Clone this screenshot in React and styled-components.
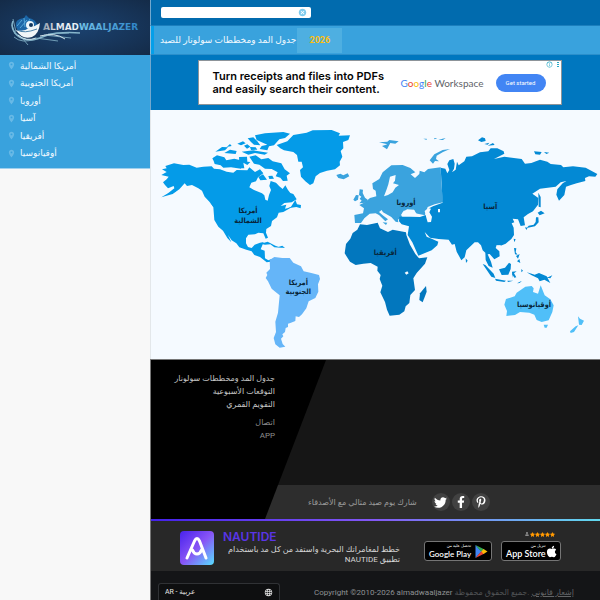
import React from "react";
import styled, { createGlobalStyle } from "styled-components";
import { FaTwitter, FaFacebookF, FaPinterestP, FaApple, FaStar, FaUser } from "react-icons/fa";
import { MdLocationOn, MdLanguage, MdCancel, MdInfoOutline } from "react-icons/md";

const GlobalStyle = createGlobalStyle`
  * { box-sizing: border-box; }
  html { scrollbar-width: none; }
  body {
    margin: 0;
    background: #f8f8f8;
    font-family: Roboto, "DejaVu Sans", sans-serif;
    font-size: 8px;
  }
  a { color: inherit; text-decoration: none; }
  svg { display: block; }
`;

const Page = styled.div`
  display: flex;
  min-height: 100vh;
`;

const Sidebar = styled.aside`
  flex: 0 0 150px;
`;

const LogoBox = styled.a`
  display: flex;
  height: 55px;
  background: radial-gradient(ellipse at 50% 50%, #1b4270, #142b48);
`;

const Zones = styled.ul`
  display: grid;
  grid-auto-rows: 1fr;
  height: 114px;
  margin: 0;
  padding: 2px 0 6px 7px;
  list-style: none;
  background: #39a2dd;
  border-bottom: 1px solid #9fd0ee;
  font-size: 9px;
`;

const Zone = styled.li`
  display: flex;
  align-items: center;
  gap: 4px;
  color: #f3faff;

  svg {
    color: #68b9e6;
  }
`;

const Main = styled.main`
  flex: 1;
  min-width: 0;
`;

const Section = styled.section`
  border-left: 1px solid ${props => props.$edge};
`;

const SearchBar = styled(Section)`
  display: flex;
  height: 26px;
  padding: 7px 10px;
  background: #016bae;
  border-bottom: 1px solid #1c7fbd;
`;

const SearchField = styled.form`
  display: flex;
  align-items: center;
  width: 150px;
  height: 11px;
  padding-right: 4px;
  background: #fff;
  border-radius: 2px;
`;

const SearchInput = styled.input`
  flex: 1;
  min-width: 0;
  height: 11px;
  padding: 0 4px;
  border: 0;
  background: none;
  font-size: 8px;
`;

const IconButton = styled.button`
  padding: 0;
  border: 0;
  background: none;
  color: #7dcbee;
`;

const Menu = styled(Section)`
  display: flex;
  align-items: center;
  height: 29px;
  background: #39a2dd;
  border-bottom: 1px solid #2b8fcb;
  color: #f1f9ff;
  font-size: 9px;

  &::before {
    content: "";
    align-self: stretch;
    width: 3px;
    background: #049fe9;
  }
`;

const MenuLink = styled.a`
  padding: 0 1px 0 6px;
  white-space: nowrap;
`;

const Year = styled.a`
  width: 45px;
  font-weight: 700;
  line-height: 25px;
  text-align: center;
  color: #fdbf11;
  background: #4eafe1;
`;

const AdZone = styled(Section)`
  display: flex;
  justify-content: center;
  padding: 5px 0 5px 8px;
  background: #0077bf;
`;

const Ad = styled.div`
  position: relative;
  display: flex;
  align-items: center;
  width: 364px;
  height: 45px;
  padding: 0 15px 0 14px;
  border: 1px solid #8d9499;
  background: #fff;
`;

const AdTitle = styled.strong`
  flex: 0 0 188px;
  font: 600 11px/13px Inter, sans-serif;
  color: #050505;
  white-space: nowrap;
`;

const Brand = styled.span`
  flex: 1;
  font: 10px/14px Lato, sans-serif;
  color: #5f6368;
  white-space: nowrap;
`;

const Tint = styled.span`
  color: ${props => props.color};
`;

const AdButton = styled.button`
  width: 50px;
  height: 18px;
  padding: 0;
  border: 0;
  border-radius: 9px;
  background: #4285f4;
  color: #fff;
  font: 6px Roboto, sans-serif;
`;

const AdMarks = styled.span`
  position: absolute;
  top: 0;
  right: 2px;
  display: flex;
  gap: 4px;
  color: #28a9c6;
`;

const MapZone = styled(Section)`
  background: #f5faff;

  svg {
    width: 100%;
    height: auto;
  }
`;

const MapLabel = styled.text`
  font: bold 22px "DejaVu Sans Condensed", "DejaVu Sans", sans-serif;
  fill: #08263a;
  text-anchor: middle;
`;

const FooterTop = styled(Section)`
  position: relative;
  background: #161616;
  border-top: 1px solid #777;

  &::before {
    content: "";
    position: absolute;
    inset: 0 auto 0 0;
    width: 175px;
    background: #000;
    clip-path: polygon(0 0, 100% 0, 114px 100%, 0 100%);
  }
`;

const FooterLinks = styled.nav`
  position: relative;
  display: flex;
  flex-direction: column;
  width: 124px;
  height: 125px;
  padding-top: 12px;
  line-height: 13px;
  color: #c4c4c4;
  text-align: right;
  white-space: nowrap;
`;

const MinorLinks = styled.div`
  display: flex;
  flex-direction: column;
  margin-top: 5px;
  color: #8c8c8c;
`;

const ShareBar = styled.div`
  display: flex;
  align-items: center;
  gap: 2px;
  height: 34px;
  padding-left: 157px;
  background: #2d2d2d;
  color: #9b9b9b;
`;

const ShareText = styled.span`
  margin-right: 13px;
  white-space: nowrap;
`;

const Round = styled.a`
  display: flex;
  align-items: center;
  justify-content: center;
  width: 18px;
  height: 18px;
  border-radius: 50%;
  background: #414141;
  color: #fff;
`;

const AppBar = styled(Section)`
  display: flex;
  align-items: center;
  height: 52px;
  padding: 6px 38px 0 29px;
  background: linear-gradient(90deg, #4421e8, #8359f5 50%, #61d9ee) top / 100% 2px no-repeat #282828;
`;

const AppText = styled.div`
  flex: 0 0 177px;
  margin: 0 24px 0 9px;
`;

const AppName = styled.strong`
  display: block;
  font: 600 12px/12px Inter, sans-serif;
  margin-bottom: 2px;
  color: #5a35e6;
`;

const AppPitch = styled.p`
  margin: 0;
  line-height: 10px;
  color: #d6d6d6;
  white-space: nowrap;
`;

const Stores = styled.div`
  display: flex;
  align-items: flex-end;
  gap: 9px;
  height: 34px;
  padding-bottom: 4px;
`;

const Store = styled.div`
  display: flex;
  flex-direction: column;
  align-items: flex-end;
  gap: 4px;
`;

const Rating = styled.span`
  display: flex;
  padding-right: 6px;
  color: #ff9800;

  svg:first-child {
    margin-right: 1px;
    color: #8c8c8c;
  }
`;

const Badge = styled.a`
  display: flex;
  align-items: center;
  justify-content: space-between;
  width: ${props => props.$width}px;
  height: 20px;
  padding: 0 3px 0 4px;
  border: 1px solid #757575;
  border-radius: 3px;
  background: #000;
  color: #fff;
  text-align: right;
  white-space: nowrap;
`;

const BadgeHint = styled.span`
  display: block;
  font-size: 4px;
  line-height: 6px;
`;

const BadgeName = styled.span`
  display: block;
  font: 600 ${props => props.$size}px/10px Lato, Roboto, sans-serif;
`;

const Bottom = styled(Section)`
  display: flex;
  align-items: flex-start;
  gap: 34px;
  min-height: 29px;
  padding: 12px 27px 0 7px;
  background: #141517;
`;

const Language = styled.label`
  display: flex;
  align-items: center;
  flex: 0 0 122px;
  height: 17px;
  padding: 0 6px;
  border: 1px solid #303235;
  border-bottom: 0;
  border-radius: 3px 3px 0 0;
  background: #0e0f10;
  color: #e6e6e6;
`;

const Select = styled.select`
  flex: 1;
  appearance: none;
  padding: 0;
  border: 0;
  background: none;
  color: inherit;
  font: 7px Roboto, "DejaVu Sans", sans-serif;
`;

const Legal = styled.p`
  display: flex;
  gap: 2px;
  margin: 5px 0 0;
  line-height: 10px;
  color: #515355;
  white-space: nowrap;
`;

const Owner = styled.span`
  color: #8e9193;
`;

const LegalLink = styled.a`
  color: #626466;
  text-decoration: underline;
`;

const zones = [
  "أمريكا الشمالية",
  "أمريكا الجنوبية",
  "أوروبا",
  "آسيا",
  "أفريقيا",
  "أوقيانوسيا"
];

const footerLinks = ["جدول المد ومخططات سولونار", "التوقعات الأسبوعية", "التقويم القمري"];

const google = [
  ["G", "#4285f4"],
  ["o", "#ea4335"],
  ["o", "#fbbc05"],
  ["g", "#4285f4"],
  ["l", "#34a853"],
  ["e", "#ea4335"]
];

function Logo() {
  return (
    <svg width="150" height="55" viewBox="0 0 150 55" role="img" aria-label="Almadwaaljazer">
      <defs>
        <linearGradient id="word">
          <stop offset="0" stopColor="#8d9aab" />
          <stop offset=".15" stopColor="#dfe6ec" />
          <stop offset=".36" stopColor="#eef3f7" />
          <stop offset=".38" stopColor="#73c3e8" />
          <stop offset="1" stopColor="#2d84c8" />
        </linearGradient>
      </defs>
      <g fill="none" stroke="#86b5cb">
        <path d="M13 21C10 28 15 36 24 39C36 43 44 34 57 33Q70 32 80 33" strokeWidth="1.5" />
        <path d="M12 25L15 34M13 19l3 13M14 37Q22 44 35 39M23 39l5 6M36 38l22 3M44 35l27 3M48 34l21-1" opacity=".8" />
        <path d="M40 36Q55 32 65 39M18 35q8 7 18 3" stroke="#d0e2ea" />
      </g>
      <path d="M16 27Q14 19 24 18L26 15L29 18Q36 19 38 27L35 34H20Z" fill="#1b66a7" />
      <path d="M17 26L22 20M20 28l7-8M24 18l1 9M30 19l-3 5" stroke="#54a6d9" />
      <path d="M16 30Q24 32 29 28Q34 27 40 23Q39 34 32 37Q22 40 16 30Z" fill="#f2f6f8" />
      <path d="M17 30Q24 34 37 29" stroke="#4d83aa" fill="none" />
      <circle cx="30" cy="25" r="4" fill="#eaf5fb" />
      <circle cx="31" cy="25" r="2" fill="#12385f" />
      <text x="43" y="30" fontFamily="DejaVu Sans, sans-serif" fontWeight="bold" fontSize="9" fill="url(#word)">ALMADWAALJAZER</text>
    </svg>
  );
}

function WorldMap() {
  return (
    <svg viewBox="3 -30 1347 747" strokeLinejoin="round">
      <g fill="#049be8">
        <path d="M34 165L50 156L36 148L50 145L46 138L72 130L100 135L118 134L140 143L160 140L185 139L192 146L210 148L230 155L250 158L260 150L292 151L298 142L315 156L330 148L340 160L324 172L318 184L304 188L298 202L312 210L336 220L343 226L346 239L353 242L357 225L363 210L358 198L362 183L378 188L388 199L398 207L406 196L414 210L421 219L430 222L440 238L425 247L403 249L392 258L409 254L405 266L425 262L400 276L386 278L381 292L366 303L363 318L349 327L348 338L354 353L347 356L340 340L325 338L315 343L295 344L288 355V370L294 381L305 384L314 374L330 368L341 366L332 388L344 392L345 415L355 421L367 416L362 425L350 427L330 411L313 405L305 394L289 389L268 382L259 370L245 361L234 345L244 367L232 354L219 332L205 320L193 300L190 262L181 248L164 230L156 212L145 205L126 195L111 198L104 190L88 208L68 222L34 232L55 219L73 205L71 198L54 205L45 195L39 187L50 178L56 170Z" />
        <path d="M380 75L412 64L430 45L470 38L488 31L545 30L570 40L566 47L600 46L595 60L579 66L580 85L572 93L577 110L569 125L570 136L555 148L531 152L510 159L497 169L490 190L480 195L466 184L453 170L450 150L459 142L455 125L445 125L441 105L430 96L402 91L391 85Z" />
        <path d="M315 46L345 40L400 36L420 41L405 54L388 58L372 76L357 79L352 91L329 87L335 78L352 74L320 60Z" />
        <path d="M293 55l17-3 12 12 9 12-19-2-9-8zM191 123l-4-8 14-9 22 6 6 9 24-5 16 4 9 16-5 10-30-4-23 1-8-7-18-4zM196 95l20-14 18 1-9 9zM223 99l17-10 20 4-3 9zM275 95l35-4 44 7-10 6-29-5-20 5zM262 71l17-7 8 6-14 6zM230 81l10-9 5 6zM267 111l24-1 1 15 9 1-9 9-12-7 3 17-14-1zM298 110l19-4 17 12 21-4 13 10 26 6 10 18 16 12-10 7 3 15-14 1-8-10-14-4 6-12-18-10-20-1-17-12-16-3zM325 171l14-8 12 16-20 2zM355 168l12-1 5 9-14 1zM282 77l10-4 9 7-10 6zM300 81l17 1 5 7-19 1z" />
        <path d="M413 265l10-5 13-20 5 13 12 2-1 10-13-4zM332 371l21-6 23 12 17 6-20-1-12-9-16 1zM382 382l15-5 8 7zM179 246l14 7 5 10-8-3zM68 210l15-5-7 10z" />
      </g>
      <path transform="translate(240 330)" fill="#65b5f8" d="M119 90L133 81L157 84L179 84L190 98L213 109L221 124L244 129L267 135L270 147L264 163L265 185L256 204L236 214L229 235L216 253L207 261L197 259L196 273L181 279L174 281L174 291L167 294L165 306L157 313L160 319L153 326L158 342L166 350L149 353L136 343L131 324L138 306L136 275L144 248L149 196L134 184L125 176L114 154L107 144L112 135L109 128L120 117Z" />
      <g transform="translate(540 0)" fill="#3aa3de">
        <path d="M75 309L73 285L99 280L102 265L88 255L105 247L120 234L139 229L137 212L129 207L127 190L148 177L158 157L184 136L218 135L241 144L256 157L242 163L255 174L268 162L269 152L283 157L294 147L332 142L334 187L339 247L314 253L293 261L285 286L256 280L252 269L231 268L216 280L217 289L204 299L205 307L197 305L184 291L159 277L155 270L147 276L160 287L174 298L166 304L147 285L137 280L119 281L103 295L93 309Z" />
        <path d="M89 208l10 1-1 10 7 14 8 6-4 9-21 2 7-8-6-6 5-6-7-5zM70 239l8-14 8 1-2 13-9 5zM19 165l12-4 9 5 13-6 5 9-17 9-16-4zM299 121l14-18 25-13 22-3-21 9-19 11-2 10 9 7-12-1-6 8zM147 67l25-2 6-5 28 4-10 7-15-2-10 19-15-10 16-5zM280 56h10v4zM312 54l10 1-8 3zM325 59l22-5-8 6z" />
        <path d="M158 307l14 1-4 7z" />
      </g>
      <path fill="#f5faff" d="M702 229L710 208L715 193L720 170L737 165L735 182L729 190L747 195L736 203L728 217L714 225ZM753 285L761 272L775 270L781 276L792 269L800 282L795 288L774 290L756 289Z" />
      <path fill="#0277be" d="M630 313L651 315L683 308L690 325L714 336L728 329L768 337L769 345L780 374L796 402L807 415L832 412L825 431L800 459L790 475L795 510L781 525L778 549L767 559L763 574L748 584L719 587L711 569L705 546L691 517L697 497L689 477L692 465L682 452L683 440L662 429L640 431L617 435L600 425L584 400L588 372L601 356L608 339L622 329Z" />
      <path fill="#0277be" d="M810 520l18-22 2 17-12 32-10-7z" />
      <g fill="#0389d4">
        <path d="M872 143L886 146L892 160L898 150L892 132L898 121L910 117L914 131L912 146L906 157L917 149L921 125L926 136L943 124L949 110L966 109L990 97L1015 94L1022 85L1042 85L1061 94L1063 101L1032 117L1063 110L1115 117L1125 131L1144 129L1170 119L1192 125L1202 132L1233 135L1240 142L1269 139L1307 143L1342 162L1336 170L1317 169L1305 174L1306 183L1280 190L1263 195L1248 200L1243 225L1227 242L1219 224L1222 208L1238 190L1249 183L1232 187L1217 200L1170 206L1147 221L1165 234L1164 254L1149 274L1134 282L1121 292L1125 316L1112 318L1104 298L1088 296L1093 307L1085 310L1091 323L1092 345L1084 357L1067 371L1052 377L1040 375L1037 384L1048 394L1049 409L1033 418L1019 402L1013 403L1023 425L1028 443L1016 438L1007 420L1006 398L998 391L993 376L984 367L974 367L949 391L944 412L934 421L920 395L914 372L906 374L896 359L866 357L840 353L824 336L830 350L845 356L865 365L862 376L845 391L805 407L787 367L773 345L777 319L755 313L747 304L748 290L780 290L810 291L838 281L833 267L849 259L878 248Z" />
        <path d="M984 61l12-9 9 3 2 8-13 3zM1003 72l15-4-5 6zM1013 77l16-8 5 6zM1152 94l23 2-5 8-14-1zM1182 96l16 2-9 4zM1165 218l7 13v31l-6-2zM1163 278l10-6 11 8-15 6zM1158 292l7 0 1 15-11 12-25 5 6-7 15-3 6-8zM1125 322l8 1-4 7zM1091 356l6 2-4 9zM947 415l6 7-5 7z" />
        <path d="M998 432l8 3 25 26 5 13-12-4zM1035 476l33 6-5 4-25-4zM1047 448l18-5 12-15 6 4-1 15-7 17-20 1zM1086 455l14-1-8 6 7 12-6 1-5-8-1 9zM1092 384l7 1-2 12 6 7-8-1zM1098 408l11-6-5 14zM1101 424l7-7 3 12zM1130 457l15 4 9 3 13-5 23 10 11 20-18-10-14 5-5-9-19-9zM1191 473l16-7-6 9zM1114 447l5 5-5 5zM1072 482l18 0-16 4zM1101 490l15-8-7 7z" />
      </g>
      <path fill="#f5faff" d="M824 273L835 264L843 266L838 277L846 290L843 306L833 307L829 293ZM864 267h6v10h-6zM764 458l8-4 4 6-7 4zM1044 376h9l-4 7z" />
      <path transform="translate(750 315)" fill="#50bff8" d="M318 222L344 214L350 203L376 185L395 183L401 190L399 201L414 206L422 181L428 196L434 211L451 223L461 241L457 261L446 286L425 291L410 285L403 269L388 263L360 261L345 270L319 273L321 258L313 239ZM431 299l13 0-4 9-6 0zM534 274l6 7 12 6-7 13-8-1zM510 319l17-15 8-3-13 20-10 3z" />
      <MapLabel x="294" y="280">أمريكا</MapLabel>
      <MapLabel x="294" y="308">الشمالية</MapLabel>
      <MapLabel x="445" y="494">أمريكا</MapLabel>
      <MapLabel x="445" y="522">الجنوبية</MapLabel>
      <MapLabel x="768" y="256">أوروبا</MapLabel>
      <MapLabel x="1021" y="266">آسيا</MapLabel>
      <MapLabel x="706" y="404">أفريقيا</MapLabel>
      <MapLabel x="1152" y="562">أوقيانوسيا</MapLabel>
    </svg>
  );
}

function AppIcon() {
  return (
    <svg width="34" height="34" viewBox="0 0 34 34">
      <defs>
        <linearGradient id="tile" x2="1" y2="1">
          <stop offset="0" stopColor="#4822ed" />
          <stop offset=".5" stopColor="#8854f5" />
          <stop offset="1" stopColor="#58dfff" />
        </linearGradient>
      </defs>
      <rect width="34" height="34" rx="4" fill="url(#tile)" />
      <path d="M7 27L14.500 10Q17 5 19.500 10L26 27M12.500 19Q14 23 17 23Q20 23 21.500 19" fill="none" stroke="#fff" strokeWidth="3" strokeLinecap="round" strokeLinejoin="round" />
    </svg>
  );
}

function PlayIcon() {
  return (
    <svg width="14" height="15" viewBox="0 0 13 15">
      <path d="M1 1V14L7 7.500Z" fill="#4285f4" />
      <path d="M1 1L10 5.500L7 8Z" fill="#34a853" />
      <path d="M1 14L10 9.500L7 7Z" fill="#ea4335" />
      <path d="M9 5L13 7.500L9 10L7 7.500Z" fill="#fbbc05" />
    </svg>
  );
}

function Dots() {
  return (
    <svg width="2" height="7" viewBox="0 0 2 7" fill="currentColor">
      <path d="M0 1h2v1H0zM0 3h2v1H0zM0 5h2v1H0z" />
    </svg>
  );
}

function App() {
  return (
    <Page>
      <GlobalStyle />
      <Sidebar>
        <LogoBox href="#">
          <Logo />
        </LogoBox>
        <Zones>
          {zones.map(zone => (
            <Zone key={zone}>
              <MdLocationOn size={9} />
              <a href="#">{zone}</a>
            </Zone>
          ))}
        </Zones>
      </Sidebar>
      <Main>
        <SearchBar $edge="#71a8ce">
          <SearchField>
            <SearchInput type="text" aria-label="بحث" />
            <IconButton type="reset" aria-label="مسح">
              <MdCancel size={9} />
            </IconButton>
          </SearchField>
        </SearchBar>
        <Menu $edge="#8bbddd">
          <MenuLink href="#">جدول المد ومخططات سولونار للصيد</MenuLink>
          <Year href="#">2026</Year>
        </Menu>
        <AdZone $edge="#71a8ce">
          <Ad>
            <AdTitle>
              Turn receipts and files into PDFs
              <br />
              and easily search their content.
            </AdTitle>
            <Brand>
              {google.map(([letter, color], i) => (
                <Tint key={i} color={color}>{letter}</Tint>
              ))}{" "}
              Workspace
            </Brand>
            <AdButton>Get started</AdButton>
            <AdMarks>
              <MdInfoOutline size={7} />
              <Dots />
            </AdMarks>
          </Ad>
        </AdZone>
        <MapZone $edge="#e3e7ea">
          <WorldMap />
        </MapZone>
        <FooterTop $edge="#777">
          <FooterLinks dir="rtl">
            {footerLinks.map(link => (
              <a href="#" key={link}>{link}</a>
            ))}
            <MinorLinks>
              <a href="#">اتصال</a>
              <a href="#">APP</a>
            </MinorLinks>
          </FooterLinks>
          <ShareBar>
            <ShareText dir="rtl">شارك يوم صيد مثالي مع الأصدقاء</ShareText>
            <Round href="#" aria-label="Twitter"><FaTwitter size={13} /></Round>
            <Round href="#" aria-label="Facebook"><FaFacebookF size={12} /></Round>
            <Round href="#" aria-label="Pinterest"><FaPinterestP size={12} /></Round>
          </ShareBar>
        </FooterTop>
        <AppBar $edge="#777">
          <AppIcon />
          <AppText>
            <AppName>NAUTIDE</AppName>
            <AppPitch dir="rtl">
              خطط لمغامراتك البحرية واستفد من كل مد باستخدام
              <br />
              تطبيق NAUTIDE
            </AppPitch>
          </AppText>
          <Stores>
            <Badge href="#" $width={68}>
              <span>
                <BadgeHint>تحصل عليه من</BadgeHint>
                <BadgeName $size={8}>Google Play</BadgeName>
              </span>
              <PlayIcon />
            </Badge>
            <Store>
              <Rating>
                <FaUser size={4} />
                {[1, 2, 3, 4, 5].map(n => (
                  <FaStar key={n} size={5} />
                ))}
              </Rating>
              <Badge href="#" $width={60}>
                <span>
                  <BadgeHint>تنزيل من</BadgeHint>
                  <BadgeName $size={9}>App Store</BadgeName>
                </span>
                <FaApple size={13} />
              </Badge>
            </Store>
          </Stores>
        </AppBar>
        <Bottom $edge="#777">
          <Language>
            <Select aria-label="اللغة">
              <option>AR - عربية</option>
            </Select>
            <MdLanguage size={9} />
          </Language>
          <Legal>
            <Owner>Copyright ©2010-2026 almadwaaljazer</Owner>
            <span dir="ltr">جميع الحقوق محفوظة.</span>
            <LegalLink href="#">إشعار قانوني</LegalLink>
          </Legal>
        </Bottom>
      </Main>
    </Page>
  );
}

export default App;
